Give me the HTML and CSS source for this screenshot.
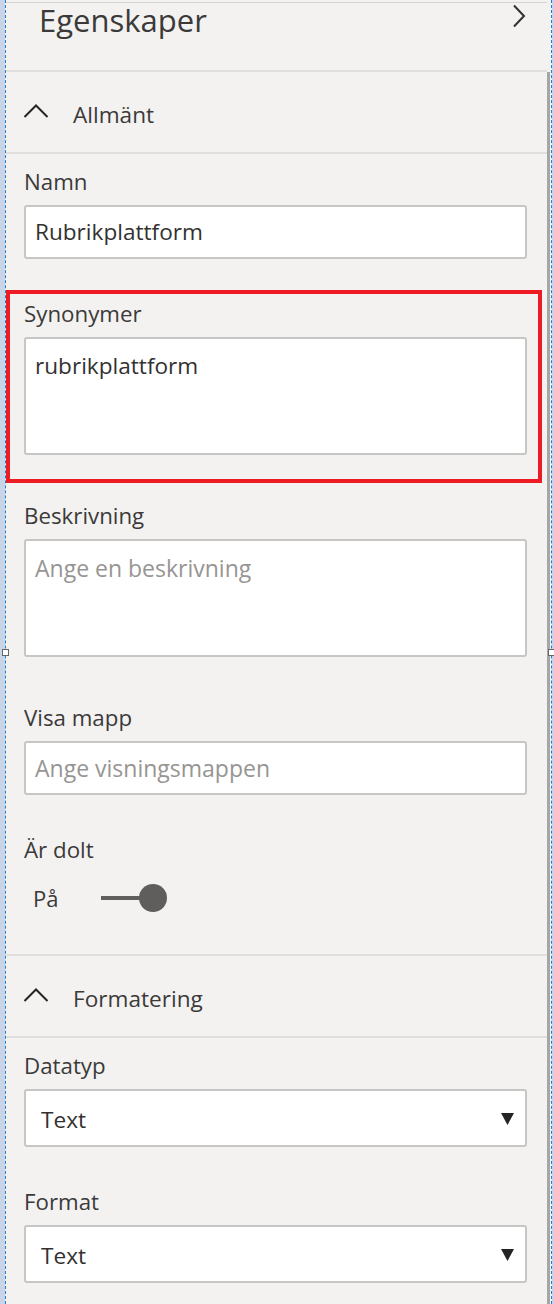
FILE: index.html
```html
<!DOCTYPE html>
<html lang="sv">
<head>
<meta charset="utf-8">
<title>Egenskaper</title>
<link rel="stylesheet" href="styles.css">
</head>
<body>
<div class="strip strip-left"></div>
<div class="panel">
  <div class="content">
    <div class="topline"></div>
    <div class="title-row">
      <h1 class="title">Egenskaper</h1>
      <svg class="chev-right" width="14" height="24" viewBox="0 0 14 24"><path d="M2 1.5 L12 12 L2 22.5" fill="none" stroke="#323130" stroke-width="2"/></svg>
    </div>
    <div class="divider"></div>
    <div class="section-header">
      <svg class="chev-up" width="26" height="14" viewBox="0 0 26 14"><path d="M1.5 13 L13 1.5 L24.5 13" fill="none" stroke="#252423" stroke-width="2"/></svg>
      <span class="section-title">Allmänt</span>
    </div>
    <div class="divider"></div>
    <div class="fields">
      <div class="field">
        <div class="label">Namn</div>
        <div class="input">Rubrikplattform</div>
      </div>
      <div class="field highlighted">
        <div class="label">Synonymer</div>
        <div class="textarea">rubrikplattform</div>
      </div>
      <div class="field field-ta">
        <div class="label">Beskrivning</div>
        <div class="textarea placeholder">Ange en beskrivning</div>
      </div>
      <div class="field">
        <div class="label">Visa mapp</div>
        <div class="input placeholder">Ange visningsmappen</div>
      </div>
      <div class="field field-toggle">
        <div class="label">Är dolt</div>
        <div class="toggle-row">
          <span class="toggle-label">På</span>
          <span class="toggle"><span class="track"></span><span class="knob"></span></span>
        </div>
      </div>
    </div>
    <div class="divider"></div>
    <div class="section-header">
      <svg class="chev-up" width="26" height="14" viewBox="0 0 26 14"><path d="M1.5 13 L13 1.5 L24.5 13" fill="none" stroke="#252423" stroke-width="2"/></svg>
      <span class="section-title">Formatering</span>
    </div>
    <div class="divider"></div>
    <div class="fields">
      <div class="field">
        <div class="label">Datatyp</div>
        <div class="select"><span>Text</span><svg width="13" height="12" viewBox="0 0 13 12"><path d="M0 0 H13 L6.5 12 Z" fill="#252423"/></svg></div>
      </div>
      <div class="field">
        <div class="label">Format</div>
        <div class="select"><span>Text</span><svg width="13" height="12" viewBox="0 0 13 12"><path d="M0 0 H13 L6.5 12 Z" fill="#252423"/></svg></div>
      </div>
    </div>
  </div>
  <div class="scroll"><div class="thumb"></div></div>
</div>
<div class="strip strip-right"></div>
<span class="handle handle-left"></span>
<span class="handle handle-right"></span>
</body>
</html>
```
FILE: styles.css
```css
* { box-sizing: border-box; }
html, body { margin: 0; padding: 0; }
body {
  width: 554px;
  height: 1304px;
  display: flex;
  background: #c9d5e7;
  font-family: "Open Sans", "Noto Sans", sans-serif;
  color: #323130;
  overflow: hidden;
  position: relative;
}
.strip-left { width: 5px; flex: none; }
.strip-right { width: 2px; flex: none; }
.panel {
  width: 547px;
  flex: none;
  display: flex;
  background: #f3f2f1;
  border-left: 1px dashed #1b7fd6;
  border-right: 1px dashed #1b7fd6;
}
.content { width: 541px; flex: none; }
.scroll { width: 4px; flex: none; padding-top: 72px; }
.thumb { width: 3px; height: 100%; background: #a8a6a4; }
.topline { height: 1px; margin-top: 2px; background: #d6d4d2; }
.title-row {
  height: 67px;
  display: flex;
  justify-content: space-between;
  align-items: flex-start;
  padding: 0 21px 0 33px;
}
.title {
  margin: 0;
  font-size: 31px;
  font-weight: 400;
  line-height: 34px;
  color: #3b3a39;
}
.chev-right { margin-top: 1px; }
.divider { height: 2px; background: #e1dfdd; }
.section-header {
  height: 80px;
  display: flex;
  align-items: center;
  padding-left: 17px;
  gap: 24px;
}
.chev-up { margin-top: -2px; }
.section-title { font-size: 22.6px; line-height: 28px; padding-top: 6px; color: #3b3a39; }
.fields { padding: 16px 20px 0 18px; }
.field { margin-bottom: 43px; position: relative; }
.field-ta, .highlighted { margin-bottom: 49px; }
.field-toggle { margin-bottom: 42px; }
.label { font-size: 22.3px; line-height: 24px; margin-bottom: 11px; color: #3b3a39; }
.input, .textarea, .select {
  background: #fff;
  border: 2px solid #c8c6c4;
  border-radius: 3px;
  font-size: 22.6px;
  color: #323130;
}
.input { height: 54px; padding: 0 9px; line-height: 50px; }
.textarea { height: 118px; padding: 13px 9px 0; line-height: 28px; }
.placeholder { color: #979593; font-size: 23px; }
.select {
  height: 58px;
  display: flex;
  align-items: center;
  justify-content: space-between;
  padding: 2px 11px 0 15px;
}
.highlighted::after {
  content: "";
  position: absolute;
  top: -12px;
  left: -18px;
  right: -15px;
  bottom: -28px;
  border: 4px solid #ed1c24;
}
.toggle-row {
  margin-top: 22px;
  height: 28px;
  display: flex;
  align-items: center;
  padding-left: 9px;
}
.toggle-label { font-size: 22px; line-height: 28px; width: 68px; color: #3b3a39; }
.toggle { position: relative; width: 66px; height: 28px; display: flex; align-items: center; }
.track { width: 50px; height: 4px; background: #605e5c; }
.knob {
  position: absolute;
  right: 0;
  top: 0;
  width: 28px;
  height: 28px;
  border-radius: 50%;
  background: #605e5c;
}
.handle {
  position: absolute;
  top: 649px;
  width: 7px;
  height: 7px;
  background: #fff;
  border: 1px solid #666;
}
.handle-left { left: 2px; }
.handle-right { left: 548px; }
```
